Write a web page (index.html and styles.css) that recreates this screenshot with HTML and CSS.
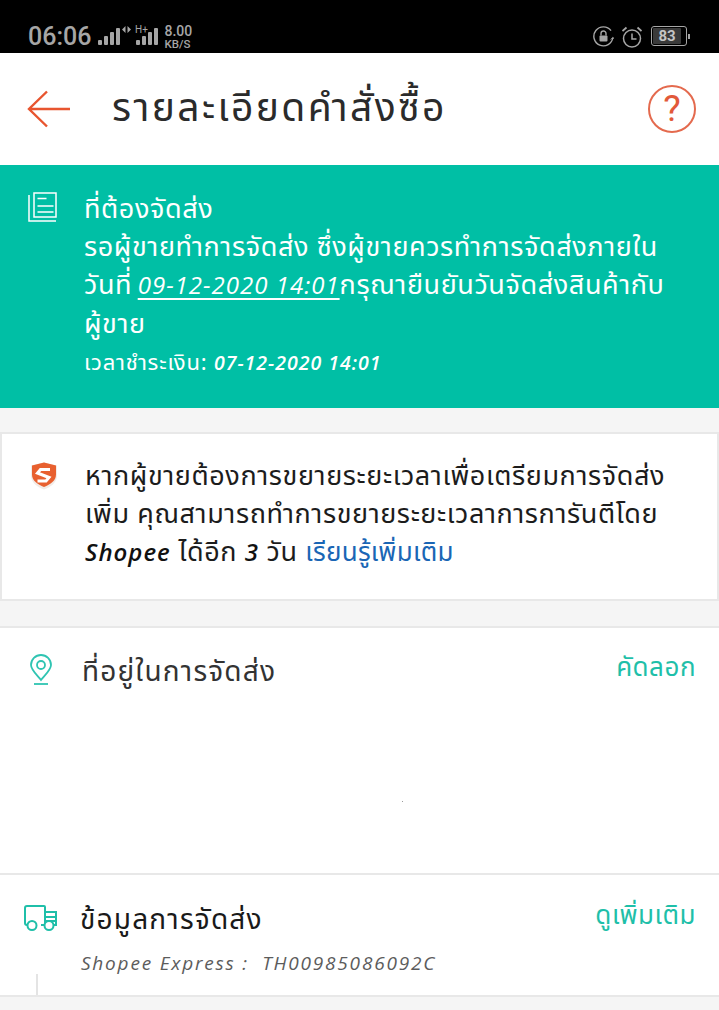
FILE: index.html
```html
<!DOCTYPE html>
<html lang="th">
<head>
    <meta charset="UTF-8">
    <title>รายละเอียดคำสั่งซื้อ</title>
    <link rel="stylesheet" href="styles.css">
</head>
<body>
    <div class="status-bar">
        <div class="status-left">
            <span class="clock">06:06</span>
            <svg class="signal" width="24" height="18" viewBox="0 0 24 18">
                <g fill="#a6a6a6">
                    <rect x="0" y="12" width="4" height="5" rx="1"/>
                    <rect x="6" y="8" width="4" height="9" rx="1"/>
                    <rect x="12" y="4" width="4" height="13" rx="1"/>
                    <rect x="18" y="0" width="4" height="17" rx="1"/>
                </g>
            </svg>
            <svg class="signal-two" width="38" height="26" viewBox="0 -4 38 26">
                <g fill="#a6a6a6">
                    <path d="M3.500 0v7L0 3.500zM5.500 0v7L9 3.500z"/>
                    <rect x="14" y="14" width="4" height="5" rx="1"/>
                    <rect x="20" y="10" width="4" height="9" rx="1"/>
                    <rect x="26" y="6" width="4" height="13" rx="1"/>
                    <rect x="32" y="2" width="4" height="17" rx="1"/>
                </g>
                <text x="13" y="7" class="hplus">H+</text>
            </svg>
            <div class="speed"><span>8.00</span><span class="speed-unit">KB/S</span></div>
        </div>
        <div class="status-right">
            <svg width="21" height="21" viewBox="0 0 21 21" fill="none" stroke="#a6a6a6" stroke-width="1.400">
                <path d="M19.800 11.500a9.500 9.500 0 1 1-1.800-6.800"/>
                <path d="M17.800 13.500l2-2 1.200 1.200" stroke-width="1"/>
                <rect x="6.500" y="9.500" width="8" height="6" rx="1" fill="#a6a6a6" stroke="none"/>
                <path d="M8 9.500V7.500a2.500 2.500 0 0 1 5 0v2"/>
            </svg>
            <svg class="alarm" width="20" height="22" viewBox="0 0 20 22" fill="none" stroke="#a6a6a6" stroke-width="1.500">
                <circle cx="10" cy="12.500" r="8.500"/>
                <path d="M10 7.500v5.500h4.500"/>
                <path d="M.5 5l4-3.500M19.500 5l-4-3.500" stroke-width="1.800"/>
            </svg>
            <div class="battery">
                <div class="battery-body"><span class="battery-fill">83</span></div>
                <span class="battery-tip"></span>
            </div>
        </div>
    </div>

    <header class="app-header">
        <svg class="back-icon" width="44" height="38" viewBox="0 0 44 38" fill="none" stroke="#e8552f" stroke-width="2.400">
            <path d="M20 1.500L2 19l18 17.500M2 19h41"/>
        </svg>
        <h1 class="page-title">รายละเอียดคำสั่งซื้อ</h1>
        <div class="help-icon">?</div>
    </header>

    <section class="banner">
        <svg class="banner-icon" width="30" height="31" viewBox="0 0 30 31" fill="none" stroke="#ffffff" stroke-width="1.500">
            <rect x="7" y="1" width="22" height="24"/>
            <path d="M2 3v26h27"/>
            <path d="M10.500 6.500h9M10.500 14h16M10.500 20h16"/>
        </svg>
        <div class="banner-text">
            <div class="banner-line">ที่ต้องจัดส่ง</div>
            <div class="banner-line">รอผู้ขายทำการจัดส่ง ซึ่งผู้ขายควรทำการจัดส่งภายใน<br>วันที่ <u class="hand due-date">09-12-2020 14:01</u>กรุณายืนยันวันจัดส่งสินค้ากับ<br>ผู้ขาย</div>
            <div class="banner-paid">เวลาชำระเงิน: <span class="hand">07-12-2020 14:01</span></div>
        </div>
    </section>

    <section class="notice">
        <svg class="shield" width="30" height="30" viewBox="0 0 30 30">
            <path d="M15 1.500l13 3v10c0 7-6 11.500-13 14-7-2.500-13-7-13-14v-10z" fill="#f1ece8"/>
            <path d="M15 1.500l12 3v9c0 6-5.500 10-12 12.500-6.500-2.500-12-6.500-12-12.500v-9z" fill="#e8602f"/>
            <path d="M21 8.500H11.500L8.500 12 20 16.500 17 20H8.500" fill="none" stroke="#ffffff" stroke-width="3"/>
        </svg>
        <p class="notice-text">หากผู้ขายต้องการขยายระยะเวลาเพื่อเตรียมการจัดส่ง<br>เพิ่ม คุณสามารถทำการขยายระยะเวลาการการันตีโดย<br><span class="hand hand-bold">Shopee</span> ได้อีก <span class="hand hand-bold">3</span> วัน <a class="link" href="#">เรียนรู้เพิ่มเติม</a></p>
    </section>

    <section class="address">
        <div class="row">
            <svg class="row-icon" width="26" height="32" viewBox="0 0 26 32" fill="none" stroke="#2fc4b2" stroke-width="1.800">
                <path d="M13 26C7 19 3 15.500 3 11a10 10 0 0 1 20 0c0 4.500-4 8-10 15z"/>
                <circle cx="13" cy="11" r="4"/>
                <path d="M6 30h14"/>
            </svg>
            <div class="row-title muted">ที่อยู่ในการจัดส่ง</div>
            <a class="row-action" href="#">คัดลอก</a>
        </div>
        <span class="speck"></span>
    </section>

    <section class="shipping">
        <div class="row">
            <svg class="truck-icon" width="34" height="26" viewBox="0 0 34 26" fill="none" stroke="#1fbfa9" stroke-width="2">
                <path d="M8 20H3a2 2 0 0 1-2-2V3a2 2 0 0 1 2-2h17a1 1 0 0 1 1 1v18h-4"/>
                <path d="M21 7h11v13h-3M21 12h11M21 16h11"/>
                <circle cx="8" cy="20.500" r="4.500" fill="#ffffff"/>
                <circle cx="25" cy="20.500" r="4.500" fill="#ffffff"/>
            </svg>
            <div class="row-title">ข้อมูลการจัดส่ง</div>
            <a class="row-action" href="#">ดูเพิ่มเติม</a>
        </div>
        <div class="tracking hand">Shopee Express :&nbsp; TH00985086092C</div>
        <span class="timeline"></span>
    </section>
</body>
</html>
```

FILE: styles.css
```css
body {
    margin: 0;
    width: 719px;
    height: 1010px;
    overflow: hidden;
    background-color: #f5f5f5;
    font-family: "Noto Sans", "Noto Sans Thai", "Noto Sans Thai UI", "Open Sans", sans-serif;
    color: #222222;
}
svg {
    display: block;
    flex-shrink: 0;
}

/* status bar */
.status-bar {
    height: 53px;
    box-sizing: border-box;
    padding: 23px 29px 0 28px;
    background-color: #000000;
    display: flex;
    justify-content: space-between;
    color: #a6a6a6;
}
.status-left {
    display: flex;
    align-items: flex-start;
}
.clock {
    font-family: Roboto, sans-serif;
    font-size: 25px;
    font-weight: 500;
    line-height: 28px;
    margin-right: 7px;
}
.signal {
    margin-top: 5px;
}
.signal-two {
    margin-top: -1px;
}
.hplus {
    font-family: Roboto, sans-serif;
    font-size: 10px;
    fill: #a6a6a6;
}
.speed {
    display: flex;
    flex-direction: column;
    margin: 2px 0 0 4px;
    font-family: Roboto, sans-serif;
    font-size: 14px;
    line-height: 13px;
    font-weight: 500;
}
.speed-unit {
    font-size: 11.500px;
}
.status-right {
    display: flex;
    align-items: flex-start;
    gap: 8px;
    margin-top: 3px;
}
.battery {
    display: flex;
    align-items: center;
    margin-left: 1px;
}
.battery-body {
    width: 36px;
    height: 20px;
    box-sizing: border-box;
    border: 1px solid #a6a6a6;
    border-radius: 3px;
    padding: 1px;
}
.battery-fill {
    display: block;
    width: 28px;
    height: 16px;
    background-color: #3a3a3a;
    border-radius: 1px;
    color: #c4c4c4;
    font-family: Roboto, sans-serif;
    font-size: 15px;
    font-weight: 700;
    line-height: 16px;
    text-align: center;
}
.battery-tip {
    width: 2px;
    height: 5px;
    margin-left: 1px;
    background-color: #a6a6a6;
}

/* header */
.app-header {
    height: 112px;
    box-sizing: border-box;
    padding: 0 23px 0 27px;
    background-color: #ffffff;
    display: flex;
    align-items: center;
}
.page-title {
    margin: 0 0 0 41px;
    flex: 1;
    font-size: 39px;
    letter-spacing: 2.400px;
    font-weight: 400;
    color: #2b2b2b;
    white-space: nowrap;
}
.help-icon {
    width: 48px;
    height: 48px;
    box-sizing: border-box;
    border: 2px solid #e46a4e;
    border-radius: 50%;
    color: #e2593a;
    font-family: Roboto, sans-serif;
    font-size: 37px;
    line-height: 44px;
    text-align: center;
}

/* teal banner */
.banner {
    height: 243px;
    box-sizing: border-box;
    padding: 27px 0 0 27px;
    background-color: #00bfa5;
    color: #ffffff;
    display: flex;
    white-space: nowrap;
}
.banner-icon {
    margin-right: 27px;
}
.banner-text {
    margin-top: -3px;
}
.banner-line {
    font-size: 27px;
    letter-spacing: .6px;
    line-height: 38px;
}
.banner-paid {
    font-size: 22px;
    letter-spacing: .8px;
    line-height: 38px;
}
.hand {
    font-family: "Open Sans", sans-serif;
    font-style: italic;
    font-size: 24px;
    font-weight: 500;
    letter-spacing: 1px;
}
.due-date {
    margin-left: -2px;
    text-decoration-thickness: 2px;
    text-underline-offset: 4px;
}
.banner-paid .hand {
    font-size: 19.500px;
    font-weight: 600;
}

/* notice card */
.notice {
    height: 169px;
    box-sizing: border-box;
    margin-top: 24px;
    padding: 27px 0 0 30px;
    background-color: #ffffff;
    border: 2px solid #e8e8e8;
    display: flex;
    white-space: nowrap;
}
.shield {
    margin: 0 26px 0 -3px;
}
.notice-text {
    margin: -5px 0 0 0;
    font-size: 27px;
    letter-spacing: .6px;
    line-height: 38px;
    color: #1c1c1c;
}
.hand-bold {
    font-weight: 600;
    color: #111111;
}
.link {
    color: #1a66b5;
    font-size: 26px;
    letter-spacing: .3px;
    text-decoration: none;
}

/* address and shipping rows */
.address {
    height: 247px;
    box-sizing: border-box;
    position: relative;
    margin-top: 25px;
    padding: 23px 24px 0 28px;
    background-color: #ffffff;
    border-top: 2px solid #e8e8e8;
}
.speck {
    position: absolute;
    left: 402px;
    top: 173px;
    width: 1px;
    height: 1px;
    background-color: #9a9a9a;
}
.shipping {
    height: 124px;
    box-sizing: border-box;
    position: relative;
    padding: 24px 24px 0 24px;
    background-color: #ffffff;
    border-top: 2px solid #e8e8e8;
    border-bottom: 2px solid #e8e8e8;
}
.row {
    display: flex;
    align-items: center;
}
.row-title {
    flex: 1;
    font-size: 28px;
    letter-spacing: 1.200px;
    line-height: 38px;
    margin-left: 28px;
    color: #1a1a1a;
}
.row-title.muted {
    color: #333333;
}
.truck-icon + .row-title {
    margin-left: 22px;
}
.row-action {
    color: #1fbfa9;
    font-size: 26px;
    letter-spacing: .5px;
    text-decoration: none;
    margin: -4px -1px 0 0;
}
.tracking {
    margin: 13px 0 0 57px;
    font-size: 19px;
    letter-spacing: 1.800px;
    color: #5c5c5c;
}
.timeline {
    position: absolute;
    left: 36px;
    bottom: 0;
    width: 2px;
    height: 21px;
    background-color: #e4e4e4;
}
```
